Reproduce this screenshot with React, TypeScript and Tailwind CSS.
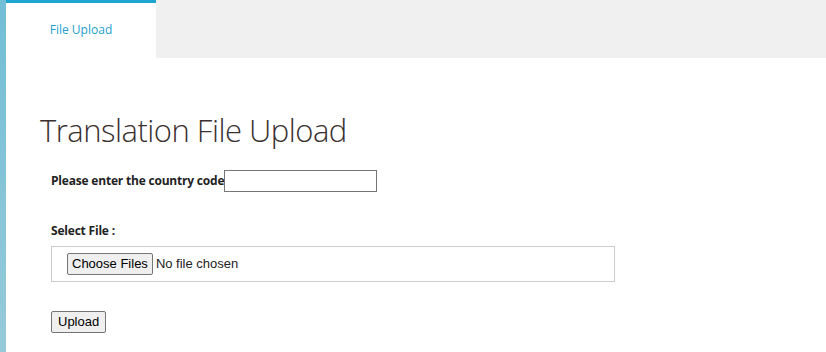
export default function App() {
  return (
    <div className="flex min-h-[352px] w-[826px] bg-white font-['Open_Sans',sans-serif]">
      <div className="w-[6px] shrink-0 bg-gradient-to-b from-[#72bed6] to-[#96cad9]" />
      <div className="flex-1">
        <div className="flex h-[58px] bg-[#f0f0f0]">
          <div className="flex w-[150px] items-center justify-center border-t-[3px] border-[#1ca6cf] bg-white pb-[2px]">
            <span className="text-[12px] text-[#1d9fcc]">File Upload</span>
          </div>
        </div>
        <div className="pl-[34px] pt-[50px]">
          <h1 className="text-[31px] leading-[44px] font-light tracking-[-0.5px] text-[#3a3030]">
            Translation File Upload
          </h1>
          <div className="mt-[18px] pl-[11px]">
            <div className="flex items-center">
              <label className="text-[12px] font-bold tracking-[-0.2px] text-[#222]">
                Please enter the country code
              </label>
              <input
                type="text"
                className="h-[22px] w-[153px] border border-[#767676] px-1 outline-none"
              />
            </div>
            <div className="mt-[30px] text-[12px] font-bold tracking-[-0.2px] text-[#222]">
              Select File :
            </div>
            <div className="mt-[6px] flex h-[36px] w-[564px] items-center border border-[#ccc] pl-[15px]">
              <input
                type="file"
                multiple
                className="font-['Liberation_Sans',sans-serif] text-[13px] text-[#222] file:mr-[3px] file:rounded-[2px] file:border file:border-[#767676] file:bg-[#efefef] file:px-[4px] file:py-0 file:text-[13px] file:text-black"
              />
            </div>
            <button className="mt-[29px] h-[22px] rounded-[2px] border border-[#767676] bg-[#efefef] px-[6px] font-['Liberation_Sans',sans-serif] text-[13px] text-black">
              Upload
            </button>
          </div>
        </div>
      </div>
    </div>
  )
}
